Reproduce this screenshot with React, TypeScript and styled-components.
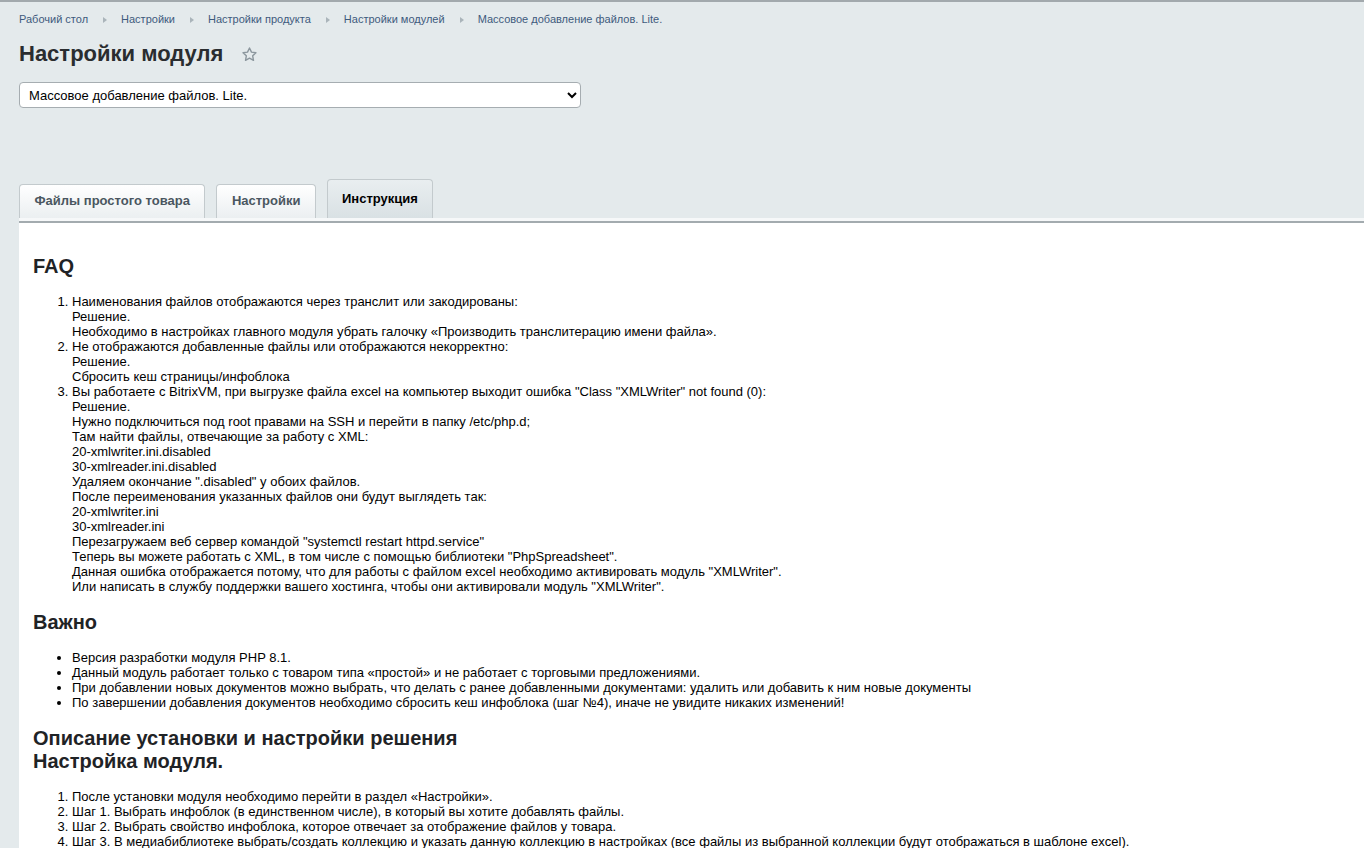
import React from "react";
import styled, { createGlobalStyle } from "styled-components";

const GlobalStyle = createGlobalStyle`
  html, body { margin: 0; padding: 0; }
  body {
    background: #e4eaec;
    font-family: "Liberation Sans", Arial, sans-serif;
    color: #000;
    border-top: 2px solid #a2a9ad;
  }
`;

const Page = styled.div`
  padding: 11px 0 0 19px;
`;

const Crumbs = styled.nav`
  display: flex;
  align-items: center;
  font-size: 11px;
  line-height: 13px;
  color: #3e5a7d;
`;

const Crumb = styled.span`
  white-space: nowrap;
`;

const Sep = styled.span`
  display: inline-block;
  width: 0;
  height: 0;
  margin: 0 14px 0 15px;
  border-top: 3px solid transparent;
  border-bottom: 3px solid transparent;
  border-left: 4px solid #aab4ba;
`;

const TitleRow = styled.div`
  display: flex;
  align-items: center;
  margin-top: 15px;
  gap: 18px;
`;

const Title = styled.h1`
  margin: 0;
  font-size: 22px;
  line-height: 25px;
  font-weight: bold;
  color: #2a2d30;
`;

const StarIcon = styled.svg`
  width: 17px;
  height: 17px;
  margin-top: 2px;
`;

const ModuleSelect = styled.select`
  display: block;
  margin-top: 16px;
  width: 562px;
  height: 26px;
  padding: 0 5px;
  border: 1px solid #a6adb1;
  border-radius: 4px;
  background: #fff;
  font-family: "Liberation Sans", Arial, sans-serif;
  font-size: 13px;
  color: #000;
`;

const TabsBar = styled.div`
  display: flex;
  align-items: flex-end;
  gap: 11px;
  margin-top: 71px;
`;

const Tab = styled.div<{ $active?: boolean }>`
  box-sizing: border-box;
  height: ${(p) => (p.$active ? 39 : 34)}px;
  padding: ${(p) => (p.$active ? "0 14px 1px" : "0 14.5px 2px")};
  display: flex;
  align-items: center;
  justify-content: center;
  border: 1px solid #c3cacd;
  border-bottom: none;
  border-radius: 4px 4px 0 0;
  font-size: 13px;
  font-weight: bold;
  color: ${(p) => (p.$active ? "#000" : "#4a5660")};
  background: ${(p) =>
    p.$active
      ? "linear-gradient(#e9eef0, #d9e1e4)"
      : "linear-gradient(#ffffff, #ebeff1)"};
  white-space: nowrap;
`;

const TabLine = styled.div`
  height: 3px;
  background: #f6f8f9;
  border-bottom: 2px solid #a3abaf;
`;

const Content = styled.div`
  background: #fff;
  padding: 15px 14px 30px 14px;
  font-size: 13px;
  line-height: 15px;
`;

const Heading = styled.h2`
  margin: 17px 0 16px;
  font-size: 20px;
  line-height: 23px;
  font-weight: bold;
  color: #1f2326;
`;

const OList = styled.ol`
  margin: 0;
  padding-left: 39px;
`;

const UList = styled.ul`
  margin: 0;
  padding-left: 39px;
`;

const Item = styled.li``;

const faq: { q: string; lines: string[] }[] = [
  {
    q: "Наименования файлов отображаются через транслит или закодированы:",
    lines: [
      "Решение.",
      "Необходимо в настройках главного модуля убрать галочку «Производить транслитерацию имени файла».",
    ],
  },
  {
    q: "Не отображаются добавленные файлы или отображаются некорректно:",
    lines: ["Решение.", "Сбросить кеш страницы/инфоблока"],
  },
  {
    q: 'Вы работаете с BitrixVM, при выгрузке файла excel на компьютер выходит ошибка "Class "XMLWriter" not found (0):',
    lines: [
      "Решение.",
      "Нужно подключиться под root правами на SSH и перейти в папку /etc/php.d;",
      "Там найти файлы, отвечающие за работу с XML:",
      "20-xmlwriter.ini.disabled",
      "30-xmlreader.ini.disabled",
      'Удаляем окончание ".disabled" у обоих файлов.',
      "После переименования указанных файлов они будут выглядеть так:",
      "20-xmlwriter.ini",
      "30-xmlreader.ini",
      'Перезагружаем веб сервер командой "systemctl restart httpd.service"',
      'Теперь вы можете работать с XML, в том числе с помощью библиотеки "PhpSpreadsheet".',
      'Данная ошибка отображается потому, что для работы с файлом excel необходимо активировать модуль "XMLWriter".',
      'Или написать в службу поддержки вашего хостинга, чтобы они активировали модуль "XMLWriter".',
    ],
  },
];

const important = [
  "Версия разработки модуля PHP 8.1.",
  "Данный модуль работает только с товаром типа «простой» и не работает с торговыми предложениями.",
  "При добавлении новых документов можно выбрать, что делать с ранее добавленными документами: удалить или добавить к ним новые документы",
  "По завершении добавления документов необходимо сбросить кеш инфоблока (шаг №4), иначе не увидите никаких изменений!",
];

const steps = [
  "После установки модуля необходимо перейти в раздел «Настройки».",
  "Шаг 1. Выбрать инфоблок (в единственном числе), в который вы хотите добавлять файлы.",
  "Шаг 2. Выбрать свойство инфоблока, которое отвечает за отображение файлов у товара.",
  "Шаг 3. В медиабиблиотеке выбрать/создать коллекцию и указать данную коллекцию в настройках (все файлы из выбранной коллекции будут отображаться в шаблоне excel).",
];

const crumbs = [
  "Рабочий стол",
  "Настройки",
  "Настройки продукта",
  "Настройки модулей",
  "Массовое добавление файлов. Lite.",
];

export default function App() {
  return (
    <>
      <GlobalStyle />
      <Page>
        <Crumbs>
          {crumbs.map((c, i) => (
            <React.Fragment key={c}>
              {i > 0 && <Sep />}
              <Crumb>{c}</Crumb>
            </React.Fragment>
          ))}
        </Crumbs>
        <TitleRow>
          <Title>Настройки модуля</Title>
          <StarIcon viewBox="0 0 24 24">
            <path
              d="M12 2.8l2.8 5.8 6.3.9-4.6 4.4 1.1 6.3L12 17.2l-5.6 3 1.1-6.3L2.9 9.5l6.3-.9z"
              fill="none"
              stroke="#8c979e"
              strokeWidth="2"
              strokeLinejoin="round"
            />
          </StarIcon>
        </TitleRow>
        <ModuleSelect defaultValue="lite">
          <option value="lite">Массовое добавление файлов. Lite.</option>
        </ModuleSelect>
        <TabsBar>
          <Tab>Файлы простого товара</Tab>
          <Tab>Настройки</Tab>
          <Tab $active>Инструкция</Tab>
        </TabsBar>
        <TabLine />
        <Content>
          <Heading>FAQ</Heading>
          <OList>
            {faq.map((f) => (
              <Item key={f.q}>
                {f.q}
                {f.lines.map((l, i) => (
                  <React.Fragment key={i}>
                    <br />
                    {l}
                  </React.Fragment>
                ))}
              </Item>
            ))}
          </OList>
          <Heading>Важно</Heading>
          <UList>
            {important.map((t) => (
              <Item key={t}>{t}</Item>
            ))}
          </UList>
          <Heading>
            Описание установки и настройки решения
            <br />
            Настройка модуля.
          </Heading>
          <OList>
            {steps.map((t) => (
              <Item key={t}>{t}</Item>
            ))}
          </OList>
        </Content>
      </Page>
    </>
  );
}
